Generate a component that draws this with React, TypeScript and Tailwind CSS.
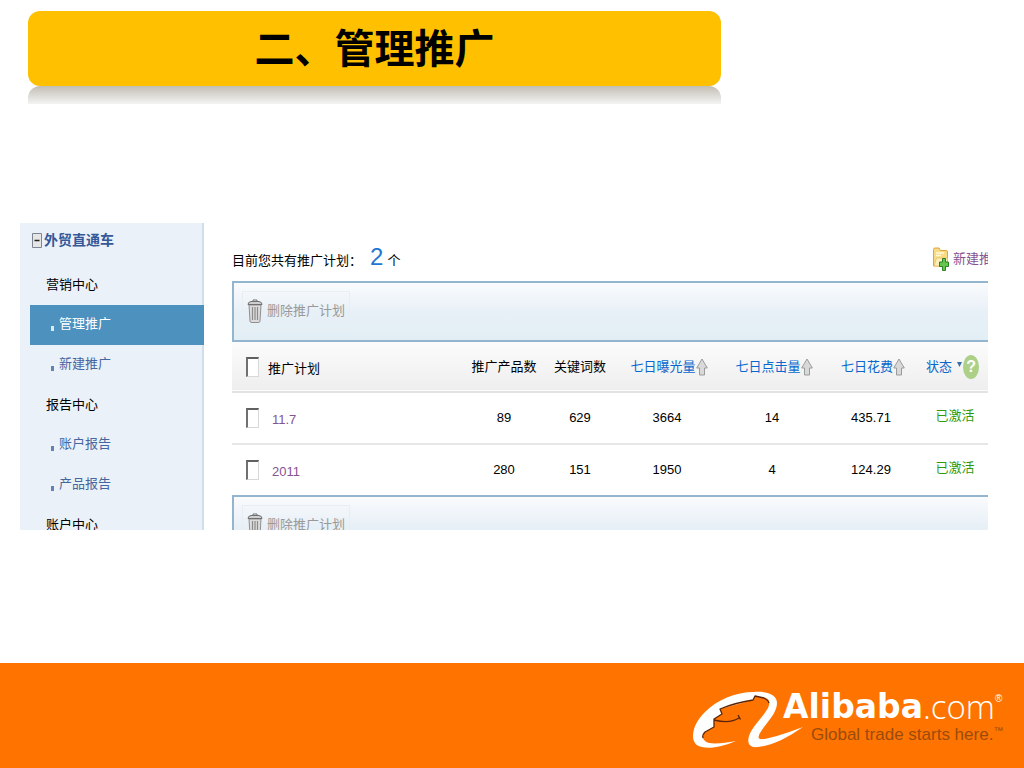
import { useState } from "react"

const menu = [
  { label: "营销中心", type: "group" },
  { label: "管理推广", type: "item" },
  { label: "新建推广", type: "item" },
  { label: "报告中心", type: "group" },
  { label: "账户报告", type: "item" },
  { label: "产品报告", type: "item" },
  { label: "账户中心", type: "group" },
]

const plans = [
  { name: "11.7", products: 89, keywords: 629, views: 3664, clicks: 14, cost: "435.71", status: "已激活" },
  { name: "2011", products: 280, keywords: 151, views: 1950, clicks: 4, cost: "124.29", status: "已激活" },
]

function TrashIcon() {
  return (
    <svg className="h-6 w-4 shrink-0" viewBox="0 0 16 24" fill="none">
      <path d="M2 6h12l-1 16q0 1.500-2 1.500H5q-2 0-2-1.500z" fill="#dcdcdc" stroke="#8f8f8f" />
      <path d="M5.500 8v13M8 8v13M10.500 8v13" stroke="#8b8b8b" strokeWidth="1.200" />
      <path d="M1 5.500Q1 3 4 2.500h8q3 .5 3 3z" fill="#cfcfcf" stroke="#707070" />
      <path d="M6 2.500V1h4v1.500" stroke="#707070" />
    </svg>
  )
}

function FolderAddIcon() {
  return (
    <svg className="h-6 w-4 shrink-0" viewBox="0 0 16 24" fill="none">
      <path d="M.5 19V2.500Q.5 1 2 1h4l1.500 2.500H13q1.500 0 1.500 1.500v14z" fill="#f8dc83" stroke="#d9a441" />
      <path d="M3 6h8M3 8.500h5" stroke="#fff8dc" strokeWidth="1.500" />
      <path d="M1 19 3.500 11h11v8z" fill="#fdeeb8" stroke="#e6bf68" strokeWidth=".8" />
      <path d="M9.500 11.500h3V15h3v4.500h-3v4h-3v-4h-3V15h3z" fill="#63c64f" stroke="#2c7d25" />
    </svg>
  )
}

function SortArrow() {
  return (
    <svg className="h-[18px] w-3 shrink-0" viewBox="0 0 12 18" fill="none">
      <path d="M6 1 11.300 10H8.500v7h-5v-7H.7z" fill="#d9d9d9" stroke="#9b9b9b" />
    </svg>
  )
}

function Checkbox({ label }: { label: string }) {
  return (
    <input
      type="checkbox"
      aria-label={label}
      className="h-5 w-[13px] shrink-0 appearance-none border-t-2 border-r border-b border-l-2 border-t-[#606060] border-r-[#d8d8d8] border-b-[#d8d8d8] border-l-[#707070] bg-white checked:bg-[#4d91bf]"
    />
  )
}

function Toolbar() {
  return (
    <div className="h-[61px] border-y-2 border-l-2 border-[#94b5ce] bg-linear-to-b from-[#fafbfd] via-[#e8f0f7] to-[#e2eef5] pt-2 pl-2">
      <button className="flex h-10 items-center gap-1 border border-[#e9eef2] px-1 text-[#999999]">
        <TrashIcon />
        删除推广计划
      </button>
    </div>
  )
}

function SortButton({ label }: { label: string }) {
  return (
    <button className="inline-flex items-center text-[#0a68cc]">
      {label}
      <SortArrow />
    </button>
  )
}

function PlanTable() {
  return (
    <table className="w-full table-fixed text-center text-black">
      <thead>
        <tr className="h-[50px] border-b-2 border-[#e3e3e3] bg-linear-to-b from-[#fcfcfc] to-[#eeeeee]">
          <th className="font-normal">
            <div className="flex items-center gap-[9px] pl-[14px]">
              <Checkbox label="全选" />
              <span className="pt-1">推广计划</span>
            </div>
          </th>
          <th className="w-[76px] font-normal">推广产品数</th>
          <th className="w-[76px] font-normal">关键词数</th>
          <th className="w-[102px] font-normal">
            <SortButton label="七日曝光量" />
          </th>
          <th className="w-[108px] font-normal">
            <SortButton label="七日点击量" />
          </th>
          <th className="w-[90px] font-normal">
            <SortButton label="七日花费" />
          </th>
          <th className="w-[70px] font-normal">
            <div className="flex items-center pl-2">
              <button className="flex items-center gap-1 text-[#0a68cc]">
                状态
                <svg className="mb-1 h-[6px] w-[7px]" viewBox="0 0 7 6">
                  <path d="M1 0h5L3.500 5z" fill="#3a6ea8" />
                </svg>
              </button>
              <button
                aria-label="帮助"
                className="flex h-6 w-4 items-center justify-center rounded-[50%] bg-[#acd087] text-base font-bold text-white"
              >
                ?
              </button>
            </div>
          </th>
        </tr>
      </thead>
      <tbody>
        {plans.map((plan) => (
          <tr key={plan.name} className="h-[52px] border-b-2 border-[#e6e6e6] last:h-[51px] last:border-b-0">
            <td>
              <div className="flex items-center gap-[13px] pl-[14px]">
                <Checkbox label={plan.name} />
                <a href={`#${plan.name}`} className="pt-1 text-[#855391]">
                  {plan.name}
                </a>
              </div>
            </td>
            <td>{plan.products}</td>
            <td>{plan.keywords}</td>
            <td className="pr-1">{plan.views}</td>
            <td className="pr-1">{plan.clicks}</td>
            <td className="pr-1">{plan.cost}</td>
            <td className="pb-1 pl-1 text-[#2f9a0c]">{plan.status}</td>
          </tr>
        ))}
      </tbody>
    </table>
  )
}

function Sidebar() {
  const [active, setActive] = useState("管理推广")

  return (
    <nav className="w-[184px] shrink-0 bg-[#ebf1f9] shadow-[inset_-2px_0_0_#cfdded]">
      <div className="flex h-[42px] items-center gap-0.5 pb-2 pl-3 text-sm font-bold text-[#34589a]">
        <svg className="h-[15px] w-[10px]" viewBox="0 0 10 15" fill="none">
          <path d="M.5.500h9v14h-9z" fill="#e6e6e6" stroke="#7e8790" />
          <path d="M2.500 7.500h5" stroke="#222" strokeWidth="1.500" />
        </svg>
        外贸直通车
      </div>
      <ul>
        {menu.map((entry) =>
          entry.type === "group" ? (
            <li key={entry.label} className="flex h-10 items-center pl-[26px] text-black">
              {entry.label}
            </li>
          ) : (
            <li key={entry.label} className="pl-[10px]">
              <button
                onClick={() => setActive(entry.label)}
                className={
                  active === entry.label
                    ? "flex h-10 w-full items-center gap-[5px] bg-[#4d91bf] pb-0.5 pl-[21px] text-white"
                    : "flex h-10 w-full items-center gap-[5px] pb-0.5 pl-[21px] text-[#45669f]"
                }
              >
                <span className="mt-2 h-[5px] w-[3px] bg-current opacity-80" />
                {entry.label}
              </button>
            </li>
          ),
        )}
      </ul>
    </nav>
  )
}

function Logo() {
  return (
    <div className="flex items-start">
      <svg className="mt-[23px] h-[66px] w-[120px] shrink-0" viewBox="0 0 120 66" fill="none">
        <path
          d="M48 55C34 61 22 63 14 61C8 60 5 56 5 50C5 42 9 34 17 26C29 14 47 6 66 6C80 5 89 9 89 17C89 25 83 32 76 41C71 48 69 52 72 53C77 54 91 50 115 41C96 54 82 60 70 61C61 62 59 57 61 50C64 41 75 31 80 22C82 17 82 14 78 12L67 10L65 14L32 23L34 28L26 33L26 41L17 46C13 51 15 55 21 57C28 58 37 57 48 55Z"
          fill="white"
        />
        <path
          d="M81 17Q80 14 76 12L67 10L65 14Q46 17 32 23L34 28L26 33L26 41L17 46Q14 49 15 52M26 34Q42 38 51 32M50 29L52.500 33.500"
          stroke="#5a2408"
          strokeWidth="1.300"
          strokeLinejoin="round"
        />
      </svg>
      <div className="-ml-[25px] w-[223px] pt-[26px] whitespace-nowrap">
        <p className="flex leading-9 text-white">
          <span className="font-['DejaVu_Sans',sans-serif] text-[33px] font-bold">Alibaba</span>
          <span className="font-['Open_Sans',sans-serif] text-[33px] font-light">.com</span>
          <span className="text-[10px] leading-5">®</span>
        </p>
        <p className="flex pl-7 text-[17px] leading-5 text-[#9a4c0c]">
          Global trade starts here.
          <span className="text-[10px] leading-3">™</span>
        </p>
      </div>
    </div>
  )
}

export default function App() {
  return (
    <div className="flex min-h-screen flex-col bg-white font-['Liberation_Sans','Noto_Sans_CJK_SC',sans-serif]">
      <header className="px-7 pt-[11px]">
        <div className="w-full max-w-[693px]">
          <h1 className="flex h-[75px] items-center justify-center rounded-xl bg-[#ffc000] text-[40px] font-bold text-black">
            二、管理推广
          </h1>
          <div className="h-[18px] rounded-t-xl bg-linear-to-b from-[#c2beb4] to-[#f4f4f4]" />
        </div>
      </header>

      <main className="mt-[119px] mr-9 ml-5 flex h-[307px] overflow-hidden text-[13px]">
        <Sidebar />
        <section className="min-w-0 flex-1 pl-7">
          <div className="flex h-[58px] items-end justify-between pb-2 text-black">
            <p className="flex items-baseline">
              目前您共有推广计划：
              <span className="mx-1 pl-1 text-2xl leading-8 text-[#2376d2]">2</span>个
            </p>
            <a href="#new" className="flex w-[55px] items-center gap-1 overflow-hidden pb-0.5 whitespace-nowrap text-[#855391]">
              <FolderAddIcon />
              新建推广
            </a>
          </div>
          <Toolbar />
          <PlanTable />
          <Toolbar />
        </section>
      </main>

      <footer className="mt-auto flex h-[105px] justify-end bg-[#ff7300] pr-[18px]">
        <Logo />
      </footer>
    </div>
  )
}
